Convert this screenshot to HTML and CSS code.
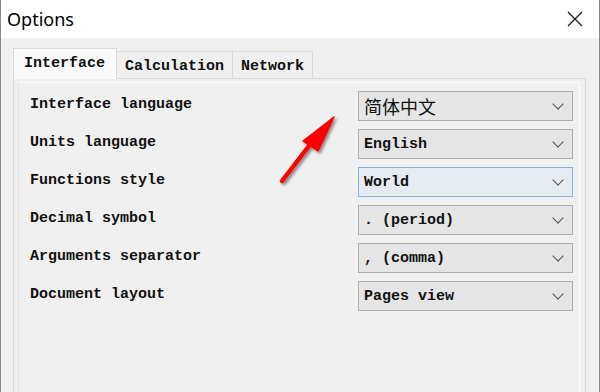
FILE: index.html
```html
<!DOCTYPE html>
<html lang="en">
<head>
    <meta charset="UTF-8">
    <title>Options</title>
    <link rel="stylesheet" href="styles.css">
</head>
<body>

    <div class="window">

        <div class="title-bar">
            <span class="title">Options</span>
            <svg class="close" width="16" height="16" viewBox="0 0 16 16">
                <path d="M1 1 L15 15 M15 1 L1 15" stroke="#1a1a1a" stroke-width="1.3" fill="none"/>
            </svg>
        </div>

        <div class="content">

            <div class="tabs">
                <div class="tab active">Interface</div>
                <div class="tab">Calculation</div>
                <div class="tab">Network</div>
            </div>

            <div class="panel">
                <div class="frame">

                    <div class="row">
                        <span class="label">Interface language</span>
                        <div class="select"><span class="cjk">简体中文</span><span class="chev"></span></div>
                    </div>
                    <div class="row">
                        <span class="label">Units language</span>
                        <div class="select"><span>English</span><span class="chev"></span></div>
                    </div>
                    <div class="row">
                        <span class="label">Functions style</span>
                        <div class="select focus"><span>World</span><span class="chev"></span></div>
                    </div>
                    <div class="row">
                        <span class="label">Decimal symbol</span>
                        <div class="select"><span>. (period)</span><span class="chev"></span></div>
                    </div>
                    <div class="row">
                        <span class="label">Arguments separator</span>
                        <div class="select"><span>, (comma)</span><span class="chev"></span></div>
                    </div>
                    <div class="row">
                        <span class="label">Document layout</span>
                        <div class="select"><span>Pages view</span><span class="chev"></span></div>
                    </div>

                </div>
            </div>

        </div>

        <!-- red arrow pointing at the language box -->
        <svg class="arrow" width="80" height="90" viewBox="0 0 80 90">
            <defs>
                <filter id="shadow" x="-30%" y="-30%" width="160%" height="160%">
                    <feDropShadow dx="2" dy="2" stdDeviation="1.5" flood-color="#000" flood-opacity="0.45"/>
                </filter>
            </defs>
            <g filter="url(#shadow)">
                <path d="M11 77 L44 34" stroke="#f00" stroke-width="4.5" stroke-linecap="round"/>
                <path d="M63 13 L32 37 L47 47 Z" fill="#f00" stroke="#f00" stroke-width="1.5" stroke-linejoin="round"/>
            </g>
        </svg>

    </div>

</body>
</html>
```

FILE: styles.css
```css
*,*::before,*::after {
    box-sizing: border-box;
    margin: 0;
    padding: 0;
}

body {
    background-color: #f0f0f0;
    font-family: 'Liberation Mono', 'Noto Sans CJK SC', monospace;
}

.window {
    position: relative;
    width: 600px;
    height: 392px;
    border-left: 1px solid #8a8a8a;
    border-right: 1px solid #8a8a8a;
    background-color: #f0f0f0;
    display: flex;
    flex-direction: column;
}

.title-bar {
    height: 38px;
    background-color: #fff;
    display: flex;
    align-items: center;
    justify-content: space-between;
    padding: 0 16px 0 6px;
}

.title {
    font-family: 'Noto Sans', 'Open Sans', sans-serif;
    font-size: 18px;
    color: #000;
    margin-top: -1px;
}

.content {
    flex: 1;
    padding: 10px 13px 0 12px;
    display: flex;
    flex-direction: column;
}

.tabs {
    display: flex;
    align-items: flex-end;
    height: 30px;
    position: relative;
    z-index: 1;
}

.tab {
    height: 27px;
    padding: 2px 8px 0;
    border: 1px solid #d9d9d9;
    border-bottom: none;
    border-left: none;
    background-color: #f0f0f0;
    font-size: 15px;
    font-weight: bold;
    color: #111;
    display: flex;
    align-items: center;
}

.tab.active {
    height: 31px;
    margin-bottom: -1px;
    border-left: 1px solid #d9d9d9;
    background-color: #fafafa;
    padding: 0 11px 1px 10px;
}

.panel {
    flex: 1;
    border: 1px solid #d9d9d9;
    border-bottom: none;
    padding: 3px 5px 0 4px;
    background-color: #f0f0f0;
}

.frame {
    height: 100%;
    border: 1px solid #fcfcfc;
    border-bottom: none;
    border-left: 1px solid #e2e2e2;
    padding: 8px 6px 0 11px;
    display: flex;
    flex-direction: column;
    gap: 8px;
}

.row {
    display: flex;
    align-items: center;
    justify-content: space-between;
    height: 30px;
}

.label {
    font-size: 15px;
    font-weight: bold;
    color: #111;
    margin-top: -3px;
}

.select {
    width: 215px;
    height: 30px;
    border: 1px solid #adadad;
    background-color: #e5e5e5;
    display: flex;
    align-items: center;
    justify-content: space-between;
    padding: 0 10px 0 5px;
    font-size: 15px;
    font-weight: bold;
    color: #111;
}

.select.focus {
    border-color: #7eb4ea;
    background-color: #e5ebf1;
}

.cjk {
    font-family: 'Noto Sans CJK SC', sans-serif;
    font-weight: normal;
    font-size: 18px;
}

.chev {
    width: 8px;
    height: 8px;
    border-right: 1.5px solid #555;
    border-bottom: 1.5px solid #555;
    transform: rotate(45deg);
    margin-top: -4px;
}

.arrow {
    position: absolute;
    left: 270px;
    top: 104px;
}
```
